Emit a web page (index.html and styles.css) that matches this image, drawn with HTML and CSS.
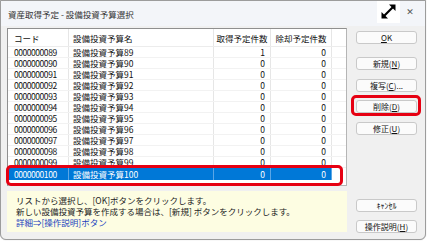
FILE: index.html
```html
<!DOCTYPE html>
<html lang="ja">
<head>
    <meta charset="UTF-8">
    <title>資産取得予定 - 設備投資予算選択</title>
    <link rel="stylesheet" href="styles.css">
</head>
<body>
    <div class="window">
        <div class="titlebar">
            <span class="title">資産取得予定 - 設備投資予算選択</span>
            <div class="controls">
                <span class="max-btn">
                    <svg width="23" height="22" viewBox="0 0 23 22">
                        <path d="M6.5 15.5 L16.5 5.5" stroke="#000" stroke-width="2.2" fill="none"/>
                        <path d="M4.5 11 L4.5 17.5 L11 17.5 Z" fill="#000"/>
                        <path d="M12 3.5 L18.5 3.5 L18.5 10 Z" fill="#000"/>
                    </svg>
                </span>
                <span class="close-btn">✕</span>
            </div>
        </div>

        <div class="content">
            <div class="main">
                <div class="list">
                    <div class="row head">
                        <div class="cell">コード</div>
                        <div class="cell">設備投資予算名</div>
                        <div class="cell center">取得予定件数</div>
                        <div class="cell center">除却予定件数</div>
                        <div class="cell"></div>
                    </div>
                    <div class="row"><div class="cell code">0000000089</div><div class="cell">設備投資予算89</div><div class="cell num">1</div><div class="cell num">0</div><div class="cell"></div></div>
                    <div class="row"><div class="cell code">0000000090</div><div class="cell">設備投資予算90</div><div class="cell num">0</div><div class="cell num">0</div><div class="cell"></div></div>
                    <div class="row"><div class="cell code">0000000091</div><div class="cell">設備投資予算91</div><div class="cell num">0</div><div class="cell num">0</div><div class="cell"></div></div>
                    <div class="row"><div class="cell code">0000000092</div><div class="cell">設備投資予算92</div><div class="cell num">0</div><div class="cell num">0</div><div class="cell"></div></div>
                    <div class="row"><div class="cell code">0000000093</div><div class="cell">設備投資予算93</div><div class="cell num">0</div><div class="cell num">0</div><div class="cell"></div></div>
                    <div class="row"><div class="cell code">0000000094</div><div class="cell">設備投資予算94</div><div class="cell num">0</div><div class="cell num">0</div><div class="cell"></div></div>
                    <div class="row"><div class="cell code">0000000095</div><div class="cell">設備投資予算95</div><div class="cell num">0</div><div class="cell num">0</div><div class="cell"></div></div>
                    <div class="row"><div class="cell code">0000000096</div><div class="cell">設備投資予算96</div><div class="cell num">0</div><div class="cell num">0</div><div class="cell"></div></div>
                    <div class="row"><div class="cell code">0000000097</div><div class="cell">設備投資予算97</div><div class="cell num">0</div><div class="cell num">0</div><div class="cell"></div></div>
                    <div class="row"><div class="cell code">0000000098</div><div class="cell">設備投資予算98</div><div class="cell num">0</div><div class="cell num">0</div><div class="cell"></div></div>
                    <div class="row"><div class="cell code">0000000099</div><div class="cell">設備投資予算99</div><div class="cell num">0</div><div class="cell num">0</div><div class="cell"></div></div>
                    <div class="row selected"><div class="cell code">0000000100</div><div class="cell">設備投資予算100</div><div class="cell num">0</div><div class="cell num">0</div><div class="cell"></div></div>
                </div>

                <div class="info">
                    <p>リストから選択し、[OK]ボタンをクリックします。</p>
                    <p>新しい設備投資予算を作成する場合は、[新規] ボタンをクリックします。</p>
                    <p class="link">詳細⇒[操作説明]ボタン</p>
                </div>
            </div>

            <div class="buttons">
                <button class="btn ok"><u>O</u>K</button>
                <button class="btn">新規(<u>N</u>)</button>
                <button class="btn">複写(<u>C</u>)...</button>
                <button class="btn marked">削除(<u>D</u>)</button>
                <button class="btn">修正(<u>U</u>)</button>
                <button class="btn cancel">ｷｬﾝｾﾙ</button>
                <button class="btn">操作説明(<u>H</u>)</button>
            </div>
        </div>
    </div>
</body>
</html>
```

FILE: styles.css
```css
* {
    margin: 0;
    padding: 0;
    box-sizing: border-box;
}

body {
    font-family: "Noto Sans CJK JP", "Noto Sans", sans-serif;
    font-size: 8.5px;
    color: #111;
    background: #fff;
    width: 427px;
    height: 241px;
    overflow: hidden;
}

.window {
    width: 426px;
    height: 240px;
    border: 1px solid #9c9c9c;
    border-radius: 0 0 6px 6px;
    background: #f0f0f0;
    display: flex;
    flex-direction: column;
    box-shadow: 0 0 1px rgba(0,0,0,0.3);
}

.titlebar {
    height: 25px;
    background: #f3f5f9;
    display: flex;
    align-items: center;
    padding-left: 7px;
}

.title {
    color: #333;
    flex: 1;
}

.controls {
    display: flex;
    align-items: flex-start;
    align-self: flex-start;
    margin-right: 5px;
}

.max-btn {
    width: 23px;
    height: 22px;
    background: #fff;
    display: block;
}

.max-btn svg {
    display: block;
}

.close-btn {
    width: 20px;
    height: 22px;
    line-height: 22px;
    text-align: center;
    color: #555;
    font-size: 9px;
    font-family: "DejaVu Sans", sans-serif;
}

.content {
    flex: 1;
    display: flex;
    padding: 2px 0 6px 6px;
}

.main {
    width: 340px;
    display: flex;
    flex-direction: column;
}

.list {
    height: 158px;
    background: #fff;
    border: 1px solid #8f8f8f;
    border-right-color: #b5b5b5;
    border-bottom-color: #b5b5b5;
}

.row {
    display: grid;
    grid-template-columns: 61px 145px 57px 61px 1fr;
    height: 11px;
    line-height: 11px;
    border-bottom: 1px solid #f2f2f2;
}

.row.head {
    height: 18px;
    line-height: 18px;
    border-bottom: 1px solid #ececec;
}

.cell {
    border-right: 1px solid #e6e6e6;
    padding: 0 4px;
    white-space: nowrap;
    overflow: hidden;
}

.cell:first-child {
    padding-left: 6px;
}

.cell:last-child {
    border-right: none;
}

.cell.code {
    letter-spacing: -0.45px;
}

.cell.center {
    text-align: center;
    padding: 0;
}

.cell.num {
    text-align: right;
    padding-right: 5px;
}

.row.selected {
    position: relative;
    height: 12px;
    line-height: 12px;
    border-bottom: none;
}

.row.selected .cell {
    background: #0078d7;
    color: #fff;
    border-right-color: #5aa6e6;
}

.row.selected .cell:last-child {
    background: #fff;
}

.row.selected::after {
    content: "";
    position: absolute;
    top: -3px;
    left: -2px;
    width: 331px;
    bottom: -6px;
    border: 3px solid #e60012;
    border-radius: 5px;
}

.info {
    margin-top: 5px;
    height: 41px;
    background: #fdfde2;
    padding: 4px 0 0 9px;
    line-height: 11px;
    color: #222;
}

.info .link {
    color: #1a3fbf;
}

.buttons {
    width: 61px;
    margin-left: 9px;
    display: flex;
    flex-direction: column;
    padding-top: 3px;
}

.btn {
    height: 13px;
    background: #fbfbfb;
    border: 1px solid #c9c9c9;
    border-radius: 3px;
    font-family: inherit;
    font-size: 8px;
    color: #111;
    line-height: 11px;
    margin-bottom: 8.5px;
    position: relative;
}

.btn.ok {
    margin-bottom: 13px;
}

.btn.marked::after {
    content: "";
    position: absolute;
    top: -6px;
    left: -6px;
    right: -5px;
    bottom: -4px;
    border: 3px solid #e60012;
    border-radius: 5px;
}

.btn.cancel {
    margin-top: auto;
}

.btn:last-child {
    margin-bottom: 0;
}
```
